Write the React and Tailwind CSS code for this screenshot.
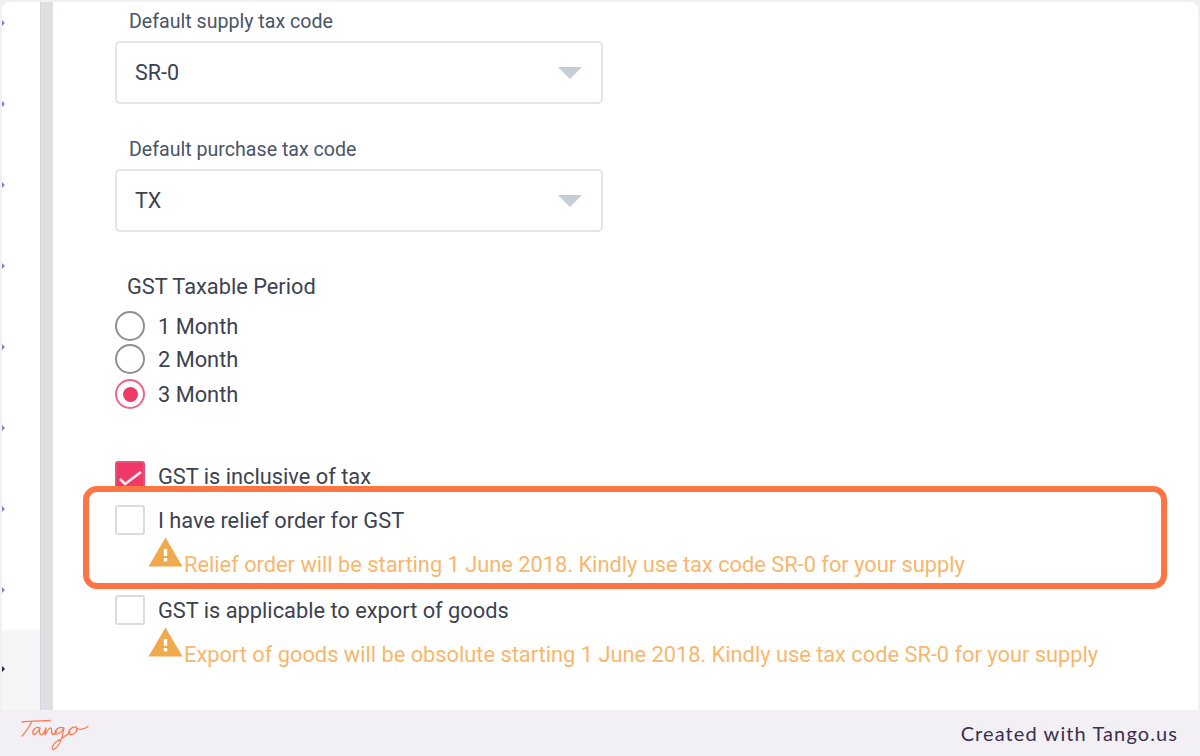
import React from 'react';

const roboto = { fontFamily: 'Roboto, sans-serif' };

const SelectField = ({ label, value, className }) => (
  <div className={className}>
    <div className="pl-[14px] pt-px h-[24px] text-[19.6px] leading-[24px] text-[#4a5568]">{label}</div>
    <div className="mt-[8px] w-[488px] h-[63px] rounded-[5px] border-2 border-[#e3e4e7] bg-white flex items-center justify-between pl-[18px] pr-[19px]">
      <span className="pt-px text-[21.5px] text-[#3c4250]">{value}</span>
      <span className="w-0 h-0 border-l-[12px] border-r-[12px] border-t-[12px] border-l-transparent border-r-transparent border-t-[#c6ccd4]" />
    </div>
  </div>
);

const Radio = ({ label, checked, className }) => (
  <div className={`flex items-center gap-[13px] h-[30px] ${className || ''}`}>
    <span className={`w-[30px] h-[30px] rounded-full border-2 flex items-center justify-center ${checked ? 'border-[#f2638a]' : 'border-[#8f8f8f]'}`}>
      {checked && <span className="w-[15px] h-[15px] rounded-full bg-[#ef3a69]" />}
    </span>
    <span className="pt-[2px] text-[21.8px] text-[#3c4250]">{label}</span>
  </div>
);

const Checkbox = ({ label, checked, className }) => (
  <div className={`flex items-center gap-[13px] h-[30px] ${className || ''}`}>
    <span className={`w-[30px] h-[30px] rounded-[3px] border-2 flex items-center justify-center ${checked ? 'bg-[#ef3a69] border-[#e8527a]' : 'bg-white border-[#dcdcdc]'}`}>
      {checked && (
        <svg width="26" height="26" viewBox="0 0 26 26" fill="none" stroke="#fde8ee" strokeWidth="2.6">
          <path d="M3 16l5 5L24 9" />
        </svg>
      )}
    </span>
    <span className="pt-[2px] text-[21.8px] text-[#3c4250]">{label}</span>
  </div>
);

const Warning = ({ text, className }) => (
  <div className={`flex items-end pl-[33px] ${className || ''}`}>
    <svg width="35" height="30" viewBox="0 0 35 30">
      <path d="M17.5 0.5L34.5 29.5H0.5Z" fill="#efaa4d" />
      <rect x="15.8" y="12" width="3.4" height="7" fill="#fff" />
      <rect x="15.8" y="21" width="3.4" height="3.4" fill="#fff" />
    </svg>
    <span className="ml-px text-[21.8px] leading-[24px] text-[#f7b76d] -mb-[10px]">{text}</span>
  </div>
);

export default function App() {
  return (
    <div className="w-[1200px] h-[756px] bg-[#f2f0f5] flex flex-col overflow-hidden relative" style={roboto}>
      <div className="flex-1 flex min-h-0 pt-[2px] pl-[2px] pr-[2px]">
        {/* left rail */}
        <div className="w-[38px] bg-white rounded-tl-[8px] flex flex-col">
          <div className="flex-1 flex flex-col gap-[75px] pt-[18px]">
            {[0, 1, 2, 3, 4, 5, 6, 7].map((i) => (
              <span key={i} className="w-0 h-0 border-t-[3px] border-b-[3px] border-l-[3px] border-t-transparent border-b-transparent border-l-[#7e86c4]" />
            ))}
          </div>
          <div className="h-[80px] bg-[#f6f6f7] pt-[36px]">
            <span className="block w-0 h-0 border-t-[3px] border-b-[3px] border-l-[3px] border-t-transparent border-b-transparent border-l-[#1b2147]" />
          </div>
        </div>
        {/* scrollbar */}
        <div className="w-[13px] bg-[#dfe0e4] border-l border-[#d4d5d8]" />
        {/* main form */}
        <div className="flex-1 bg-white rounded-tr-[8px] pl-[62px] pt-[7px]">
          <SelectField label="Default supply tax code" value="SR-0" />
          <SelectField label="Default purchase tax code" value="TX" className="mt-[33px]" />
          <div className="mt-[40px] pl-[12px] pt-px h-[28px] text-[21.8px] leading-[28px] text-[#3c4250]">GST Taxable Period</div>
          <Radio label="1 Month" className="mt-[11px]" />
          <Radio label="2 Month" className="mt-[3px]" />
          <Radio label="3 Month" checked className="mt-[5px]" />
          <Checkbox label="GST is inclusive of tax" checked className="mt-[52px]" />
          <Checkbox label="I have relief order for GST" className="mt-[14px]" />
          <Warning text="Relief order will be starting 1 June 2018. Kindly use tax code SR-0 for your supply" className="mt-[2px]" />
          <Checkbox label="GST is applicable to export of goods" className="mt-[28px]" />
          <Warning text="Export of goods will be obsolute starting 1 June 2018. Kindly use tax code SR-0 for your supply" className="mt-[2px]" />
        </div>
      </div>
      {/* footer */}
      <div className="h-[46px] shrink-0 flex items-center justify-between pl-[20px] pr-[22px]">
        <svg width="70" height="36" viewBox="0 0 70 36" fill="none" stroke="#ff7a50" strokeWidth="1.3" strokeLinecap="round" strokeLinejoin="round">
          <path d="M2 7C10 5.5 22 6 30 5.5" />
          <path d="M12 6.5C9 12 6 17 2 21" />
          <path d="M20 13C16 11 12 15 13 19C14 21 18 17 20 13C19 16 19 20 22 19.5C24 19 25 15 26 13C25.5 16 25 18 25 20C27 16 29 12.5 31 13C32.5 13.5 30.5 19 33 19.5C35 19.5 36 18 37 16" />
          <path d="M44 13C40 11 35 14 35 18C36 21 41 18 44 13C43 20 40 31 34 34.5C31 35.5 32 30 36 27C41 24 46 21 50 17" />
          <path d="M56 12C52 11.5 48 15 49 18.5C51 21 57 18 57 14.5C57 13 56.5 12.5 56 12C58 15.5 63 15 68 11.5" />
        </svg>
        <span className="text-[20px] tracking-[1.1px] text-[#3a2f4f]" style={{ fontFamily: 'Lato, sans-serif' }}>Created with Tango.us</span>
      </div>
      {/* highlight box */}
      <div className="absolute left-[83px] top-[486px] w-[1084px] h-[103px] rounded-[14px] border-[6px] border-[#ff7443]" />
    </div>
  );
}
